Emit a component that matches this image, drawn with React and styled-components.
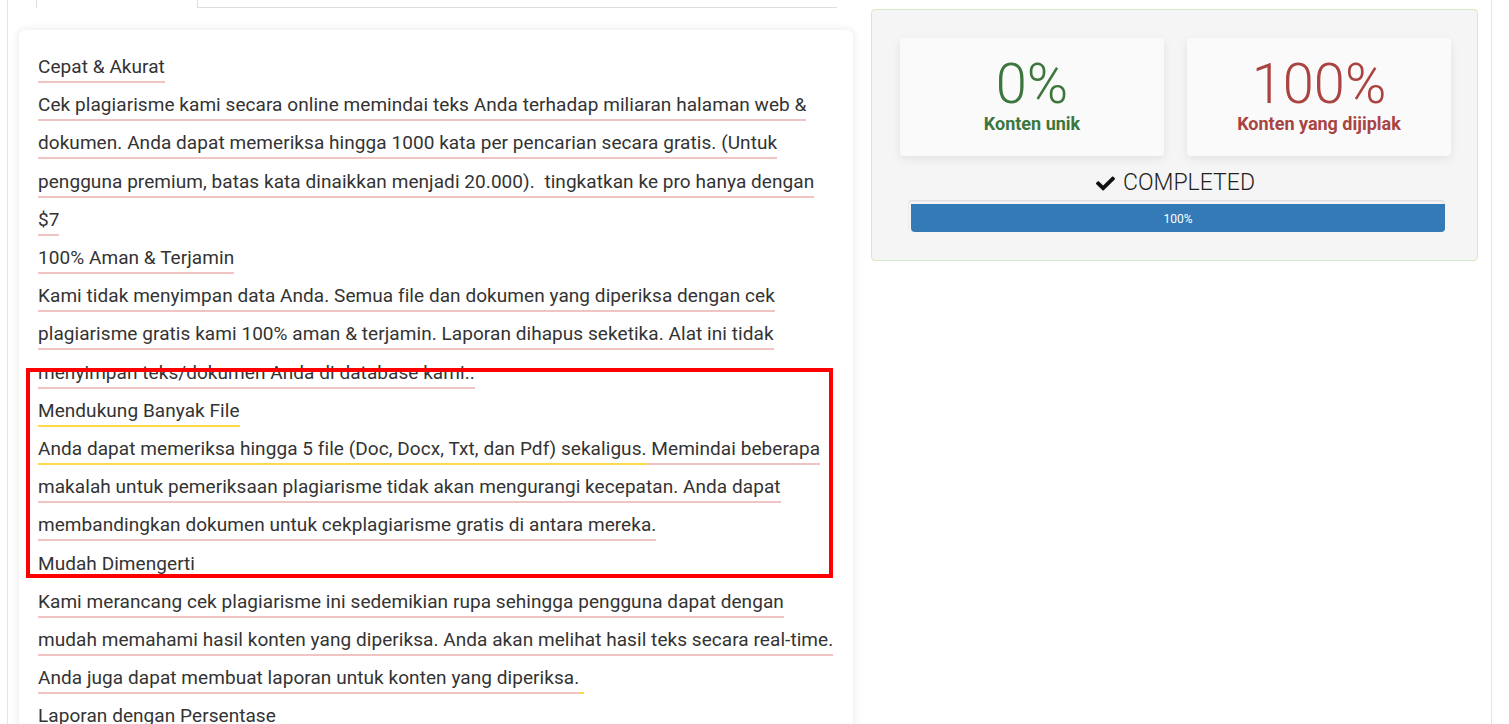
import React from "react";
import styled, { createGlobalStyle } from "styled-components";
import { FaCheck } from "react-icons/fa";

const sections = [
  { type: "title", parts: [{ text: "Cepat & Akurat", mark: "pink" }] },
  {
    type: "text",
    parts: [
      {
        text: "Cek plagiarisme kami secara online memindai teks Anda terhadap miliaran halaman web & dokumen. Anda dapat memeriksa hingga 1000 kata per pencarian secara gratis. (Untuk pengguna premium, batas kata dinaikkan menjadi 20.000).\u00a0 tingkatkan ke pro hanya dengan $7",
        mark: "pink",
      },
    ],
  },
  { type: "title", parts: [{ text: "100% Aman & Terjamin", mark: "pink" }] },
  {
    type: "text",
    parts: [
      {
        text: "Kami tidak menyimpan data Anda. Semua file dan dokumen yang diperiksa dengan cek plagiarisme gratis kami 100% aman & terjamin. Laporan dihapus seketika. Alat ini tidak menyimpan teks/dokumen Anda di database kami..",
        mark: "pink",
      },
    ],
  },
  { type: "title", parts: [{ text: "Mendukung Banyak File", mark: "yellow" }] },
  {
    type: "text",
    parts: [
      {
        text: "Anda dapat memeriksa hingga 5 file (Doc, Docx, Txt, dan Pdf) sekaligus.",
        mark: "yellow",
      },
      {
        text: " Memindai beberapa makalah untuk pemeriksaan plagiarisme tidak akan mengurangi kecepatan. Anda dapat membandingkan dokumen untuk cekplagiarisme gratis di antara mereka.",
        mark: "pink",
      },
    ],
  },
  { type: "title", parts: [{ text: "Mudah Dimengerti", mark: "none" }] },
  {
    type: "text",
    parts: [
      {
        text: "Kami merancang cek plagiarisme ini sedemikian rupa sehingga pengguna dapat dengan mudah memahami hasil konten yang diperiksa. Anda akan melihat hasil teks secara real-time. Anda juga dapat membuat laporan untuk konten yang diperiksa.",
        mark: "pink",
      },
      { text: "\u00a0", mark: "yellow" },
    ],
  },
  { type: "title", parts: [{ text: "Laporan dengan Persentase", mark: "none" }] },
];

const markColors = {
  pink: "#f1c4c4",
  yellow: "#fcd94a",
  none: "transparent",
};

function App() {
  return (
    <>
      <GlobalStyle />
      <Page>
        <LeftColumn>
          <TabBar>
            <Tab />
          </TabBar>
          <ContentCard>
            {sections.map((section, i) => (
              <Line key={i}>
                {section.parts.map((part, j) => (
                  <Marked key={j} $mark={part.mark}>
                    {part.text}
                  </Marked>
                ))}
              </Line>
            ))}
            <Highlight />
          </ContentCard>
        </LeftColumn>
        <RightColumn>
          <ResultPanel>
            <ScoreRow>
              <ScoreCard>
                <Percent $tone="good">0%</Percent>
                <ScoreLabel $tone="good">Konten unik</ScoreLabel>
              </ScoreCard>
              <ScoreCard>
                <Percent $tone="bad">100%</Percent>
                <ScoreLabel $tone="bad">Konten yang dijiplak</ScoreLabel>
              </ScoreCard>
            </ScoreRow>
            <Status>
              <FaCheck size={19} />
              COMPLETED
            </Status>
            <Progress>
              <ProgressBar style={{ width: "calc(100% - 3px)" }}>100%</ProgressBar>
            </Progress>
          </ResultPanel>
        </RightColumn>
      </Page>
    </>
  );
}

const GlobalStyle = createGlobalStyle`
  html, body {
    margin: 0;
    background: #fff;
    font-family: Roboto, "Liberation Sans", sans-serif;
    color: #333;
  }
`;

const Page = styled.div`
  display: flex;
  align-items: flex-start;
  gap: 18px;
  margin: 0 17px 0 7px;
  padding: 0 12px 0 11px;
  border-left: 1px solid #e4e4e4;
  border-right: 1px solid #e4e4e4;
  min-height: 724px;
  box-sizing: border-box;
`;

const LeftColumn = styled.div`
  width: 834px;
  flex-shrink: 0;
`;

const TabBar = styled.div`
  display: flex;
  height: 8px;
  margin: 0 16px 0 17px;
  border-bottom: 1px solid #ddd;
  box-sizing: border-box;
`;

const Tab = styled.div`
  width: 162px;
  height: 8px;
  background: #fff;
  border-left: 1px solid #ddd;
  border-right: 1px solid #ddd;
  box-sizing: border-box;
`;

const ContentCard = styled.div`
  position: relative;
  margin-top: 22px;
  padding: 18px 19px 80px;
  background: #fff;
  border-radius: 6px;
  box-shadow: 0 0 10px rgba(0, 0, 0, 0.1);
`;

const Line = styled.div`
  font-size: 19px;
  letter-spacing: 0.06px;
  line-height: 38.2px;
  color: #333;
`;

const Marked = styled.span`
  padding-bottom: 3px;
  border-bottom: 2px solid ${(p) => markColors[p.$mark]};
`;

const Highlight = styled.div`
  position: absolute;
  left: 7px;
  top: 338px;
  width: 807px;
  height: 210px;
  border: 4px solid #ff0000;
  box-sizing: border-box;
  pointer-events: none;
`;

const RightColumn = styled.div`
  width: 607px;
  flex-shrink: 0;
  padding-top: 9px;
`;

const ResultPanel = styled.div`
  background: #f5f5f5;
  border: 1px solid #d6e9c6;
  border-radius: 4px;
  padding: 28px 26px 28px 28px;
`;

const ScoreRow = styled.div`
  display: grid;
  grid-template-columns: 1fr 1fr;
  gap: 23px;
`;

const ScoreCard = styled.div`
  height: 118px;
  background: #fafafa;
  border-radius: 4px;
  box-shadow: 0 3px 10px rgba(0, 0, 0, 0.08);
  display: flex;
  flex-direction: column;
  align-items: center;
  padding-top: 16px;
  box-sizing: border-box;
`;

const toneColors = {
  good: "#3c763d",
  bad: "#a94442",
};

const Percent = styled.div`
  font-size: 56px;
  font-weight: 300;
  line-height: 60px;
  color: ${(p) => toneColors[p.$tone]};
`;

const ScoreLabel = styled.div`
  font-size: 18px;
  font-weight: 700;
  line-height: 20px;
  color: ${(p) => toneColors[p.$tone]};
`;

const Status = styled.div`
  display: flex;
  align-items: center;
  justify-content: center;
  gap: 8px;
  margin-top: 13px;
  font-size: 23px;
  font-weight: 300;
  line-height: 28px;
  color: #222;

  svg {
    color: #111;
  }
`;

const Progress = styled.div`
  margin: 3px 6px 0 8px;
  height: 32px;
  padding-top: 4px;
  box-sizing: border-box;
  background: #f5f5f5;
  border-radius: 4px;
  box-shadow: inset 0 1px 2px rgba(0, 0, 0, 0.12);
  display: flex;
  justify-content: flex-end;
`;

const ProgressBar = styled.div`
  height: 28px;
  background: #337ab7;
  border-radius: 0 0 4px 4px;
  color: #fff;
  font-size: 12px;
  line-height: 30px;
  text-align: center;
`;

export default App;
